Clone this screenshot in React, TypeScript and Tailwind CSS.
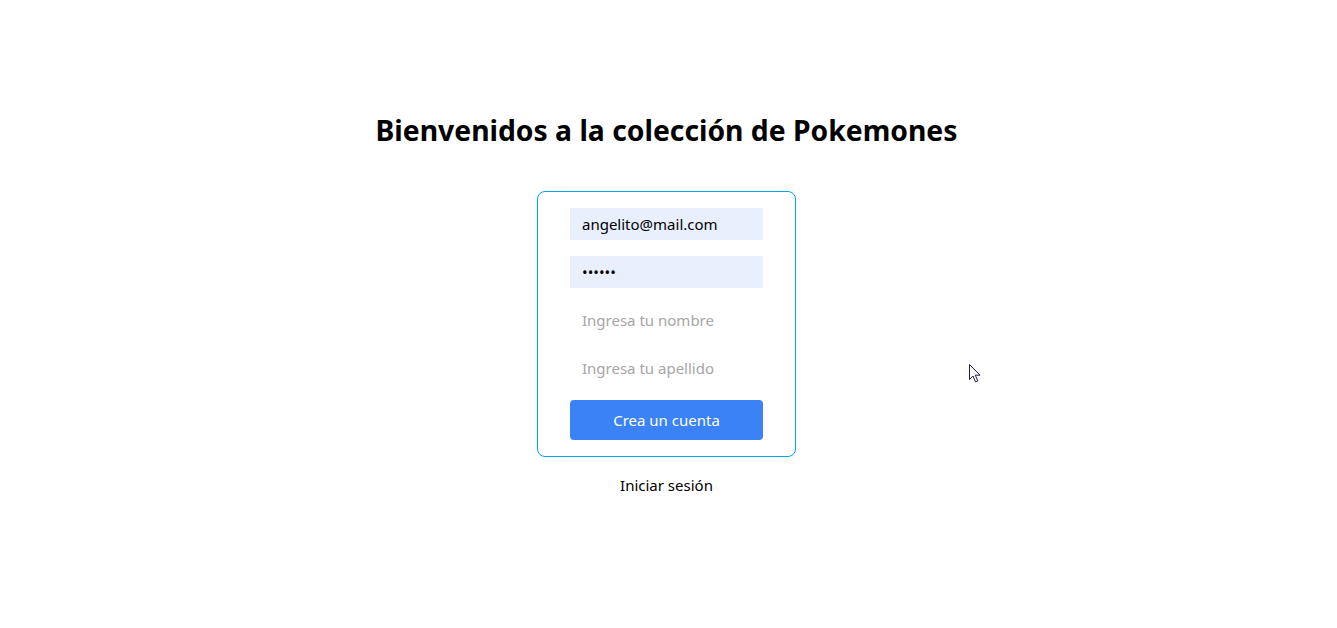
import React from "react";

export default function App() {
  return (
    <div
      className="relative w-full min-h-[628px] bg-white flex flex-col items-center pr-1"
      style={{ fontFamily: '"Noto Sans", "Open Sans", sans-serif' }}
    >
      <h1 className="mt-[112px] text-[28.3px] leading-[36px] font-bold text-black">
        Bienvenidos a la colección de Pokemones
      </h1>
      <form className="mt-[43px] w-[259px] border border-sky-500 rounded-lg px-8 py-4 flex flex-col gap-4">
        <input
          className="h-8 w-full bg-[#e8f0fe] px-3 text-[15px] text-black outline-none"
          defaultValue="angelito@mail.com"
        />
        <input
          type="password"
          className="h-8 w-full bg-[#e8f0fe] px-3 text-[15px] text-black outline-none"
          defaultValue="123456"
        />
        <input
          className="h-8 w-full bg-white px-3 text-[15px] text-black outline-none placeholder:text-[#a6a6a6]"
          placeholder="Ingresa tu nombre"
        />
        <input
          className="h-8 w-full bg-white px-3 text-[15px] text-black outline-none placeholder:text-[#a6a6a6]"
          placeholder="Ingresa tu apellido"
        />
        <button
          type="button"
          className="h-10 w-full bg-[#3b82f6] text-white text-[15px] rounded"
        >
          Crea un cuenta
        </button>
      </form>
      <a className="mt-4 text-[15px] leading-6 text-black">Iniciar sesión</a>
      <svg
        className="absolute left-[969px] top-[364px]"
        width="12"
        height="20"
        viewBox="0 0 12 20"
      >
        <path
          d="M0.5 0.5 L0.5 15.5 L4 12 L6.5 18 L8.8 17 L6.3 11.2 L11 11.2 Z"
          fill="white"
          stroke="#1e1b4b"
          strokeWidth="1"
        />
      </svg>
    </div>
  );
}
